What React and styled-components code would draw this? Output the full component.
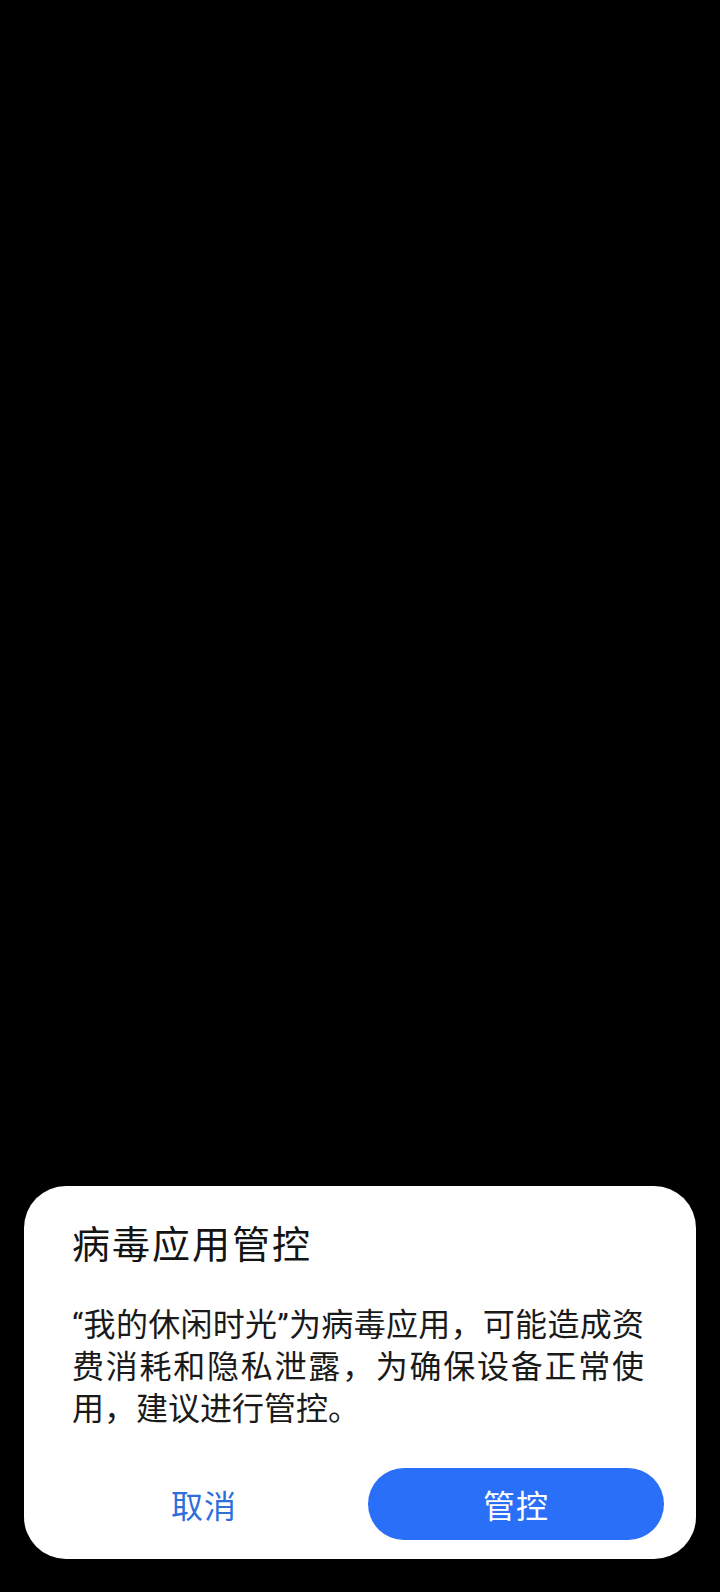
import React from "react";
import styled, { createGlobalStyle } from "styled-components";

const GlobalStyle = createGlobalStyle`
  html, body {
    margin: 0;
    padding: 0;
    background: #000;
  }
  #root {
    min-height: 100vh;
  }
  * {
    box-sizing: border-box;
  }
`;

const Screen = styled.div`
  min-height: 100vh;
  background: #000;
  display: flex;
  flex-direction: column;
  justify-content: flex-end;
  padding: 0 24px 33px;
  font-family: "Roboto", "Noto Sans CJK SC", sans-serif;
`;

const Dialog = styled.div`
  background: #fff;
  border-radius: 42px;
  padding: 32px 32px 19px;
  display: flex;
  flex-direction: column;
`;

const Title = styled.h2`
  margin: 0;
  padding: 0 16px;
  font-size: 38px;
  line-height: 54px;
  letter-spacing: 2px;
  font-weight: 400;
  color: #141414;
`;

const Message = styled.p`
  margin: 32px 0 0;
  padding: 0 20px 0 16px;
  font-size: 32px;
  line-height: 42px;
  letter-spacing: 0;
  text-align: justify;
  font-weight: 400;
  color: #1a1a1a;
`;

const Actions = styled.div`
  margin-top: 38px;
  display: grid;
  grid-template-columns: 1fr 1fr;
  gap: 16px;
`;

const ActionButton = styled.button`
  height: 72px;
  border: none;
  border-radius: 36px;
  font-family: "Roboto", "Noto Sans CJK SC", sans-serif;
  font-size: 32px;
  letter-spacing: 1px;
  font-weight: 400;
  cursor: pointer;
  background: ${(p) => (p.$primary ? "#2a6ff7" : "transparent")};
  color: ${(p) => (p.$primary ? "#ffffff" : "#2f6fdc")};
`;

export default function App() {
  return (
    <>
      <GlobalStyle />
      <Screen>
        <Dialog>
          <Title>病毒应用管控</Title>
          <Message>
            “我的休闲时光”为病毒应用，可能造成资费消耗和隐私泄露，为确保设备正常使用，建议进行管控。
          </Message>
          <Actions>
            <ActionButton>取消</ActionButton>
            <ActionButton $primary>管控</ActionButton>
          </Actions>
        </Dialog>
      </Screen>
    </>
  );
}
